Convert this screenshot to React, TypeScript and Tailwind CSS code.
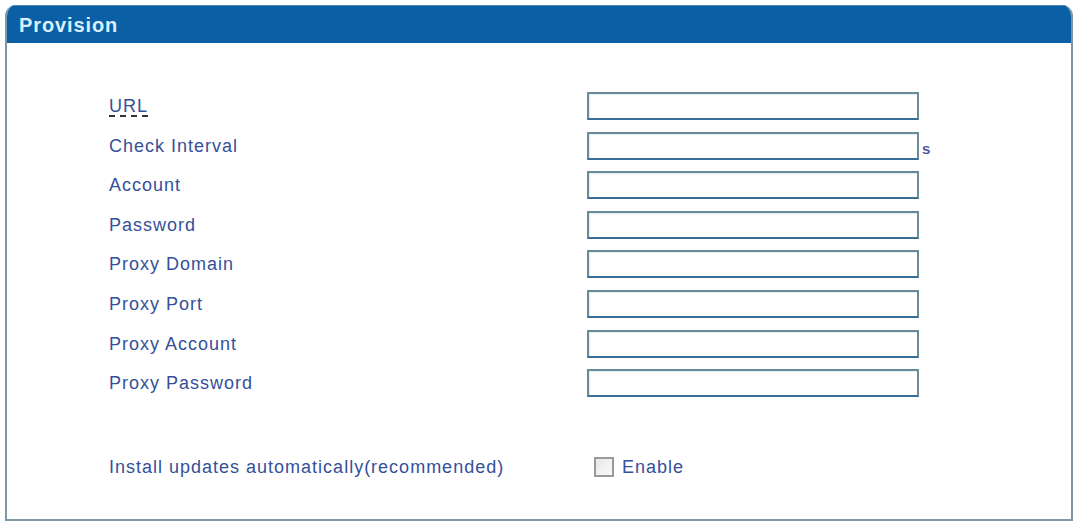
import React from "react";

const rows = [
  "Check Interval",
  "Account",
  "Password",
  "Proxy Domain",
  "Proxy Port",
  "Proxy Account",
  "Proxy Password",
];

function Field() {
  return (
    <div className="w-[332px] h-[28px] border-2 border-[#6a8c96] border-b-[#3a6c94] bg-white shadow-[inset_1px_1px_0_#dfeef2]" />
  );
}

export default function App() {
  return (
    <div className="w-[1076px] h-[523px] bg-white pt-[5px] pl-[5px]" style={{ fontFamily: '"Liberation Sans", Arial, sans-serif' }}>
      <div className="w-[1068px] h-[516px] border-2 border-t-0 border-[#7e97a6] rounded-t-[11px] overflow-hidden flex flex-col">
        <div className="h-[38px] bg-[#0a5fa5] border-t border-[#4f87b8] flex items-center pl-[12px]">
          <span className="text-[20px] font-bold tracking-[0.9px] text-[#d9effc] leading-none">Provision</span>
        </div>
        <div className="flex-1 bg-white pt-[49px] pl-[102px] flex flex-col text-[18px] tracking-[1px] text-[#34509a]">
          <div className="flex flex-col gap-[11.6px]">
            <div className="flex items-center">
              <div className="w-[478px]">
                <span className="inline-block leading-[15px] border-b-2 border-dashed border-[#333] pb-[1px]">URL</span>
              </div>
              <Field />
            </div>
            {rows.map((r, i) => (
              <div key={r} className="flex items-center">
                <div className="w-[478px] leading-none">{r}</div>
                <Field />
                {i === 0 && (
                  <span className="ml-[3px] mt-[6px] text-[15px] font-bold text-[#4a5aa0] tracking-normal leading-none">s</span>
                )}
              </div>
            ))}
          </div>
          <div className="flex items-center mt-[60px]">
            <div className="w-[485px] leading-none">Install updates automatically(recommended)</div>
            <div className="w-[20px] h-[20px] border-2 border-[#9a9a9a] bg-gradient-to-br from-[#e8e8e8] to-[#fafafa]" />
            <span className="ml-[8px] leading-none">Enable</span>
          </div>
        </div>
      </div>
    </div>
  );
}
